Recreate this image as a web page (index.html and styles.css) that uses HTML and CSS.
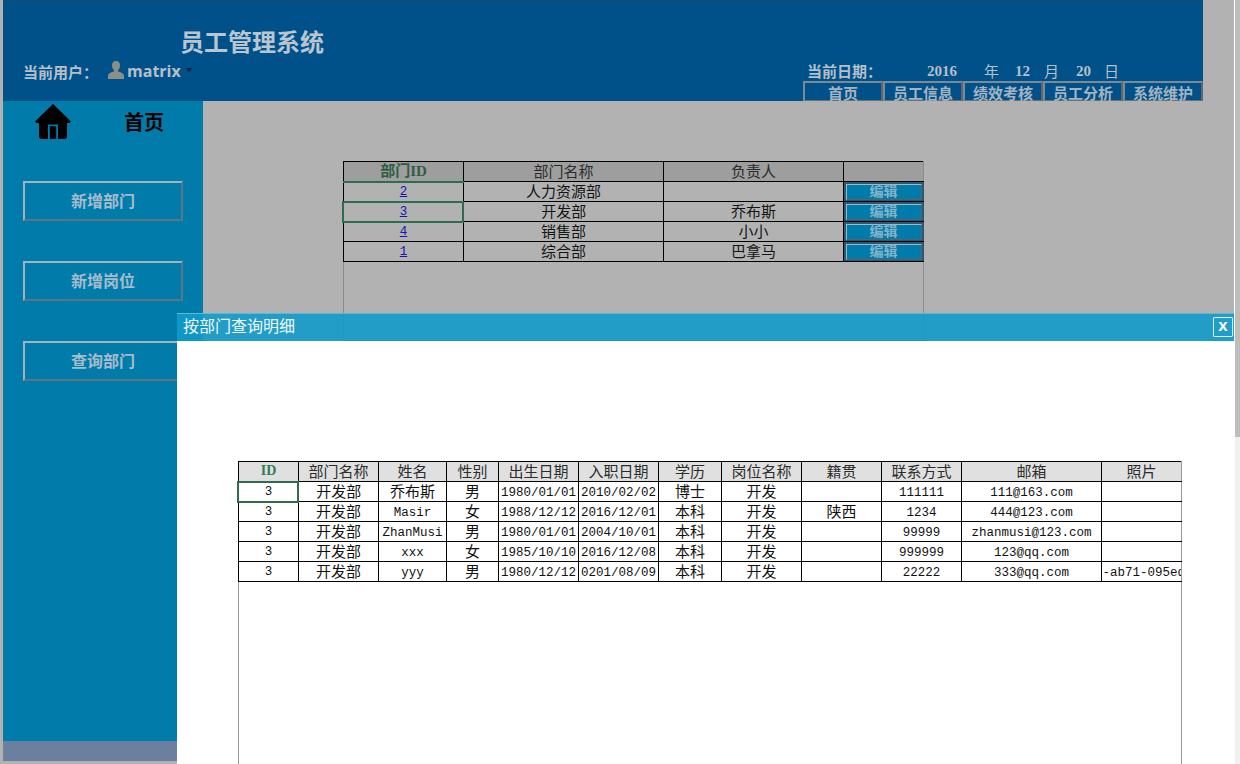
FILE: index.html
```html
<!DOCTYPE html>
<html lang="zh-CN">
<head>
<meta charset="utf-8">
<title>员工管理系统</title>
<link rel="stylesheet" href="styles.css">
</head>
<body>
<div class="page">
  <div class="app">
    <header class="topbar">
      <div class="brand">
        <h1 class="title">员工管理系统</h1>
        <div class="user">
          <span class="user-label">当前用户：</span>
          <svg class="user-icon" viewBox="0 0 16 18" aria-hidden="true"><path d="M8 0c2.600 0 4 1.900 4 4.400 0 1.900-.8 3.700-1.900 4.600v1.600c2.300.7 5.900 1.700 5.900 4.400v3H0v-3c0-2.700 3.600-3.700 5.900-4.400V9C4.800 8.100 4 6.300 4 4.400 4 1.900 5.400 0 8 0z"/></svg>
          <span class="user-name">matrix</span>
          <span class="caret"></span>
        </div>
      </div>
      <div class="topright">
        <div class="date">
          <span class="date-label">当前日期：</span>
          <span class="num">2016</span><span>年</span><span class="num">12</span><span>月</span><span class="num">20</span><span>日</span>
        </div>
        <nav class="tabs">
          <span class="tab tab-first">首页</span>
          <span class="tab">员工信息</span>
          <span class="tab">绩效考核</span>
          <span class="tab">员工分析</span>
          <span class="tab">系统维护</span>
        </nav>
      </div>
    </header>
    <div class="middle">
      <aside class="side">
        <div class="home">
          <svg class="home-icon" viewBox="0 0 36 35" aria-hidden="true"><path fill-rule="evenodd" d="M18 0l18 17.500-1.500 1.500H32v13.500c0 1.400-1 2.500-2.500 2.500h-23C5 35 4 33.900 4 32.500V19H1.500L0 17.500zM13 20.500V35h10V20.500zM14.800 22.300h6.400V35h-6.400z"/></svg>
          <span class="home-text">首页</span>
        </div>
        <div class="side-btns">
          <span class="side-btn">新增部门</span>
          <span class="side-btn">新增岗位</span>
          <span class="side-btn">查询部门</span>
        </div>
        <div class="side-foot"></div>
      </aside>
      <main class="content">
        <div class="dept-frame">
          <table class="grid dept">
            <thead>
              <tr><th class="key">部门ID</th><th>部门名称</th><th>负责人</th><th></th></tr>
            </thead>
            <tbody>
              <tr><td class="sel-top"><a class="lat" href="#">2</a></td><td>人力资源部</td><td></td><td class="act"><span class="edit">编辑</span></td></tr>
              <tr><td class="sel"><a class="lat" href="#">3</a></td><td>开发部</td><td>乔布斯</td><td class="act"><span class="edit">编辑</span></td></tr>
              <tr><td><a class="lat" href="#">4</a></td><td>销售部</td><td>小小</td><td class="act"><span class="edit">编辑</span></td></tr>
              <tr><td><a class="lat" href="#">1</a></td><td>综合部</td><td>巴拿马</td><td class="act"><span class="edit">编辑</span></td></tr>
            </tbody>
          </table>
        </div>
      </main>
    </div>
  </div>
  <div class="scroll"><div class="thumb"></div></div>
</div>

<section class="dialog">
  <div class="dialog-head">
    <span class="dialog-title">按部门查询明细</span>
    <span class="close">x</span>
  </div>
  <div class="dialog-body">
    <div class="detail-frame">
      <table class="grid detail">
        <thead>
          <tr><th class="key lat-h">ID</th><th>部门名称</th><th>姓名</th><th>性别</th><th>出生日期</th><th>入职日期</th><th>学历</th><th>岗位名称</th><th>籍贯</th><th>联系方式</th><th>邮箱</th><th>照片</th></tr>
        </thead>
        <tbody>
          <tr><td class="sel lat">3</td><td>开发部</td><td>乔布斯</td><td>男</td><td class="lat">1980/01/01</td><td class="lat">2010/02/02</td><td>博士</td><td>开发</td><td></td><td class="lat">111111</td><td class="lat">111@163.com</td><td></td></tr>
          <tr><td class="lat">3</td><td>开发部</td><td class="lat">Masir</td><td>女</td><td class="lat">1988/12/12</td><td class="lat">2016/12/01</td><td>本科</td><td>开发</td><td>陕西</td><td class="lat">1234</td><td class="lat">444@123.com</td><td></td></tr>
          <tr><td class="lat">3</td><td>开发部</td><td class="lat">ZhanMusi</td><td>男</td><td class="lat">1980/01/01</td><td class="lat">2004/10/01</td><td>本科</td><td>开发</td><td></td><td class="lat">99999</td><td class="lat">zhanmusi@123.com</td><td></td></tr>
          <tr><td class="lat">3</td><td>开发部</td><td class="lat">xxx</td><td>女</td><td class="lat">1985/10/10</td><td class="lat">2016/12/08</td><td>本科</td><td>开发</td><td></td><td class="lat">999999</td><td class="lat">123@qq.com</td><td></td></tr>
          <tr><td class="lat">3</td><td>开发部</td><td class="lat">yyy</td><td>男</td><td class="lat">1980/12/12</td><td class="lat">0201/08/09</td><td>本科</td><td>开发</td><td></td><td class="lat">22222</td><td class="lat">333@qq.com</td><td class="lat clip">-ab71-095ed</td></tr>
        </tbody>
      </table>
    </div>
  </div>
</section>
</body>
</html>
```
FILE: styles.css
```css
* { box-sizing: border-box; }
html, body { margin: 0; height: 764px; overflow: hidden; }
body {
  background: #b2b2b2;
  font-family: "Liberation Serif", "Noto Sans CJK SC", serif;
  position: relative;
}
.page { display: flex; height: 764px; }
.app { width: 1234px; padding-left: 3px; display: flex; flex-direction: column; }
.scroll { width: 6px; background: #f1f1f1; border-left: 1px solid #fff; }
.thumb { height: 437px; background: #bdbdbd; }

/* header */
.topbar {
  width: 1200px; height: 101px; flex: none;
  background: #00508a; border-top: 1px solid #1b4a6e;
  display: flex; justify-content: space-between; align-items: flex-end;
}
.brand { padding: 0 0 18px 20px; }
.title {
  margin: 0 0 1px 157px; font-size: 24px; line-height: 34px; font-weight: 700; color: #b9c6d0;
  font-family: "Noto Sans CJK SC", sans-serif;
}
.user { display: flex; align-items: center; height: 24px; margin-top: 1px; color: #b5c0c8; }
.user-label { width: 85px; font-size: 15px; font-weight: 700; font-family: "Noto Sans CJK TC", sans-serif; }
.user-icon { width: 16px; height: 18px; fill: #8a9088; margin-right: 3px; margin-bottom: 3px; }
.user-name { font-family: "Open Sans", sans-serif; font-weight: 700; font-size: 16px; width: 59px; }
.caret { width: 0; height: 0; border: 3.500px solid transparent; border-top: 4px solid #0b2136; border-bottom: 0; margin-bottom: 3px; }
.topright { width: 400px; }
.date {
  display: grid; grid-template-columns: 120px 57px 31px 29px 32px 28px auto;
  padding-left: 4px; height: 20px; line-height: 20px;
  font-size: 15px; color: #b5c0c8;
  font-family: "Noto Sans CJK SC", sans-serif;
}
.date-label { font-weight: 700; font-size: 15px; font-family: "Noto Sans CJK TC", sans-serif; }
.date .num { font-family: "Liberation Serif", serif; font-size: 15px; font-weight: 700; }
.tabs { display: flex; }
.tab {
  width: 80px; height: 20px; text-align: center;
  font-size: 15px; line-height: 19px; font-weight: 700; color: #a4b4bf;
  font-family: "Noto Sans CJK SC", sans-serif;
  border: 2px solid; border-color: #7f8a90 #5f676c #5f676c #7f8a90; border-bottom: 1px solid #6a7074;
}

/* sidebar */
.middle { flex: 1; display: flex; min-height: 0; }
.side { width: 200px; display: flex; flex-direction: column; position: relative; }
.home { height: 80px; background: #017baa; display: flex; align-items: flex-start; flex: none; }
.home-icon { width: 36px; height: 35px; margin: 3px 0 0 32px; fill: #000; flex: none; }
.home-text {
  margin: 6px 0 0 53px; font-size: 20px; line-height: 30px; font-weight: 700; color: #000;
  font-family: "Noto Sans CJK SC", sans-serif;
}
.side-btns {
  flex: 1; background: #017baa; padding-left: 20px;
  display: flex; flex-direction: column; gap: 40px; align-items: flex-start;
}
.side-btn {
  width: 160px; height: 40px; line-height: 34px; text-align: center;
  font-size: 16px; font-weight: 700; color: #a5bdcb;
  font-family: "Noto Sans CJK SC", sans-serif;
  border: 2px solid; border-color: #a3b4bd #5f7582 #5f7582 #a3b4bd;
}
.side-foot { height: 20px; flex: none; background: #6b7f9f; margin-bottom: 3px; }

/* content */
.content { flex: 1; background: #b2b2b2; padding: 60px 0 0 140px; }
.dept-frame { width: 581px; height: 180px; border: 1px solid #8c8c8c; border-top: 0; }

/* tables */
.grid {
  border-collapse: collapse; table-layout: fixed;
  font-family: "Noto Sans CJK SC", sans-serif; font-size: 15px; font-weight: 400;
}
.grid th, .grid td {
  height: 20px; padding: 0 0 2px 1px; border: 1px solid #000; text-align: center;
  line-height: 16px; white-space: nowrap; font-weight: 400;
}
.lat, .grid .lat { font-family: "Liberation Mono", monospace; font-size: 12.500px; }
.grid td.lat { padding: 2px 0 0 1px; }
.grid .key { font-weight: 700; font-family: "Liberation Serif", "Noto Sans CJK SC", serif; font-size: 15px; padding: 0 0 1px 1px; }
.grid .lat-h { font-size: 14px; }
.grid .clip { text-align: left; overflow: hidden; }

.dept { width: 580px; margin-left: -2px; color: #141414; }
.dept th { background: #9e9e9e; color: #2b2b2b; }
.dept th:nth-child(1) { width: 120px; }
.dept th:nth-child(2) { width: 200px; }
.dept th:nth-child(3) { width: 180px; }
.dept th:nth-child(4) { width: 80px; border-right-color: #8c8c8c; }
.dept .key { color: #2f5d44; border-bottom: 2px solid #2f6b4f; }
.dept .sel-top { border-bottom: 2px solid #2f6b4f; }
.dept .sel { border: 2px solid #2f6b4f; }
.grid td:first-child { padding: 0 0 0 1px; }
.grid td.sel.lat { padding: 0 0 0 1px; }
.dept a { color: #1414b4; display: block; height: 17px; line-height: 16px; padding-top: 1px; }
.grid .act { background: #33566c; padding: 1px 1px 0 2px; border-right-color: #33566c; }
.edit {
  display: block; width: 76px; height: 16px; line-height: 11px;
  background: #017baa; color: #83b3c9; font-size: 14px; font-weight: 700;
  border: 1px solid; border-color: #8ec0d4 #4a6678 #4a6678 #8ec0d4;
}

/* dialog */
.dialog {
  position: absolute; left: 177px; top: 313px; width: 1057px; height: 451px;
  display: flex; flex-direction: column;
}
.dialog-head {
  height: 28px; flex: none; padding: 0 1px 0 6px;
  background: rgba(17, 154, 202, .9);
  border-top: 1px solid #5fb8d8;
  display: flex; justify-content: space-between; align-items: center;
  color: #f2f8fb; font-size: 16px; font-family: "Noto Sans CJK SC", sans-serif;
}
.dialog-title { margin-bottom: 6px; line-height: 20px; }
.close {
  align-self: flex-start; width: 20px; height: 20px; margin-top: 3px;
  border: 1px solid #d8eef6; border-radius: 1px;
  text-align: center; line-height: 16px; font-size: 17px; font-weight: 700; color: #fff;
  font-family: "Liberation Sans", sans-serif;
}
.dialog-body { flex: 1; background: #fff; padding: 120px 0 0 61px; min-height: 0; overflow: hidden; }
.detail-frame { width: 944px; height: 400px; border: 1px solid #9a9a9a; border-top: 0; }
.detail { width: 943px; margin-left: -2px; color: #111; }
.detail th { background: #e0e0e0; color: #2c2c2c; }
.detail th:nth-child(1) { width: 60px; }
.detail th:nth-child(2) { width: 80px; }
.detail th:nth-child(3) { width: 68px; }
.detail th:nth-child(4) { width: 52px; }
.detail th:nth-child(5) { width: 80px; }
.detail th:nth-child(6) { width: 80px; }
.detail th:nth-child(7) { width: 63px; }
.detail th:nth-child(8) { width: 80px; }
.detail th:nth-child(9) { width: 80px; }
.detail th:nth-child(10) { width: 80px; }
.detail th:nth-child(11) { width: 140px; }
.detail th:nth-child(12) { width: 80px; }
.detail .key { color: #2f7d57; border-bottom: 2px solid #2f6b4f; }
.detail .sel { border: 2px solid #2f6b4f; }
.detail th:last-child, .detail td:last-child { border-right-color: #9a9a9a; }
```
